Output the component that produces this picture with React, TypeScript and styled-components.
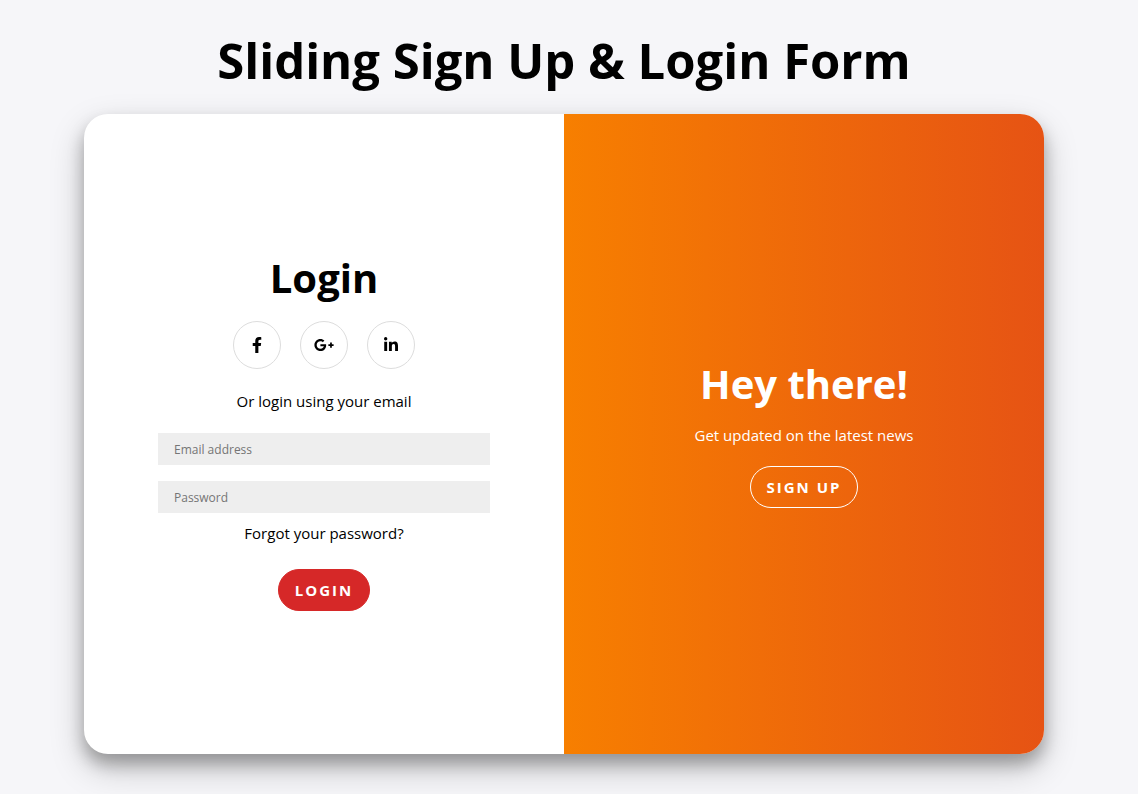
import React from "react";
import styled, { createGlobalStyle } from "styled-components";
import { FaFacebookF, FaGooglePlusG, FaLinkedinIn } from "react-icons/fa";

const GlobalStyle = createGlobalStyle`
  *, *::before, *::after { box-sizing: border-box; }
  body {
    margin: 0;
    background: #f6f6f9;
    color: #000;
    font-family: "Open Sans", "Noto Sans", sans-serif;
    font-size: 15px;
  }
`;

const Page = styled.main`
  min-height: 100vh;
  padding: 28px 94px 40px 84px;
  display: flex;
  flex-direction: column;
  align-items: center;
`;

const Title = styled.h1`
  margin: 0 0 22px;
  font-size: 49px;
  line-height: 64px;
  font-weight: 700;
  text-align: center;
`;

const Card = styled.div`
  width: 100%;
  max-width: 960px;
  min-height: 640px;
  display: grid;
  grid-template-columns: 1fr 1fr;
  border-radius: 24px;
  overflow: hidden;
  background: #fff;
  box-shadow: 0 10px 16px rgba(0, 0, 0, 0.26), 0 14px 34px rgba(0, 0, 0, 0.22);
`;

const LoginForm = styled.form`
  display: flex;
  flex-direction: column;
  align-items: center;
  justify-content: center;
  padding: 0 74px 6px;
`;

const Promo = styled.section`
  display: flex;
  flex-direction: column;
  align-items: center;
  justify-content: center;
  padding-bottom: 4px;
  color: #fff;
  background: linear-gradient(to right, #f77f00, #e65314);
`;

const Heading = styled.h2`
  margin: 0;
  font-size: 40px;
  line-height: 54px;
  font-weight: 700;
`;

const Socials = styled.div`
  display: flex;
  gap: 19px;
  margin: 16px 0 20px;
`;

const SocialLink = styled.a`
  width: 48px;
  height: 48px;
  display: flex;
  align-items: center;
  justify-content: center;
  border: 1px solid #ddd;
  border-radius: 50%;
  color: #000;
`;

const Text = styled.p`
  margin: 0;
  line-height: 24px;
`;

const Prompt = styled(Text)`
  margin-bottom: 4px;
`;

const Field = styled.input`
  width: 100%;
  height: 32px;
  margin-top: 16px;
  padding: 0 16px;
  border: 0;
  border-radius: 0;
  background: #eee;
  font-family: inherit;
  font-size: 12px;
  &::placeholder { color: #757575; opacity: 1; }
`;

const ForgotLink = styled.a`
  margin: 8px 0 24px;
  line-height: 24px;
  color: #000;
  text-decoration: none;
`;

const Pill = styled.button<{ $outline?: boolean }>`
  height: 42px;
  padding: 0 16px;
  border: 1px solid ${(p) => (p.$outline ? "#fff" : "#d62828")};
  border-radius: 21px;
  background: ${(p) => (p.$outline ? "transparent" : "#d62828")};
  color: #fff;
  font-family: inherit;
  font-size: 15px;
  font-weight: 700;
  letter-spacing: 2px;
  text-transform: uppercase;
`;

const PromoText = styled(Text)`
  margin: 12px 0 19px;
`;

export default function App() {
  return (
    <>
      <GlobalStyle />
      <Page>
        <Title>Sliding Sign Up &amp; Login Form</Title>
        <Card>
          <LoginForm onSubmit={(e) => e.preventDefault()}>
            <Heading>Login</Heading>
            <Socials>
              <SocialLink href="#" aria-label="Facebook"><FaFacebookF size={16} /></SocialLink>
              <SocialLink href="#" aria-label="Google Plus"><FaGooglePlusG size={20} /></SocialLink>
              <SocialLink href="#" aria-label="LinkedIn"><FaLinkedinIn size={16} /></SocialLink>
            </Socials>
            <Prompt>Or login using your email</Prompt>
            <Field type="email" aria-label="Email address" placeholder="Email address" />
            <Field type="password" aria-label="Password" placeholder="Password" />
            <ForgotLink href="#">Forgot your password?</ForgotLink>
            <Pill type="submit">Login</Pill>
          </LoginForm>
          <Promo>
            <Heading>Hey there!</Heading>
            <PromoText>Get updated on the latest news</PromoText>
            <Pill type="button" $outline>Sign Up</Pill>
          </Promo>
        </Card>
      </Page>
    </>
  );
}
